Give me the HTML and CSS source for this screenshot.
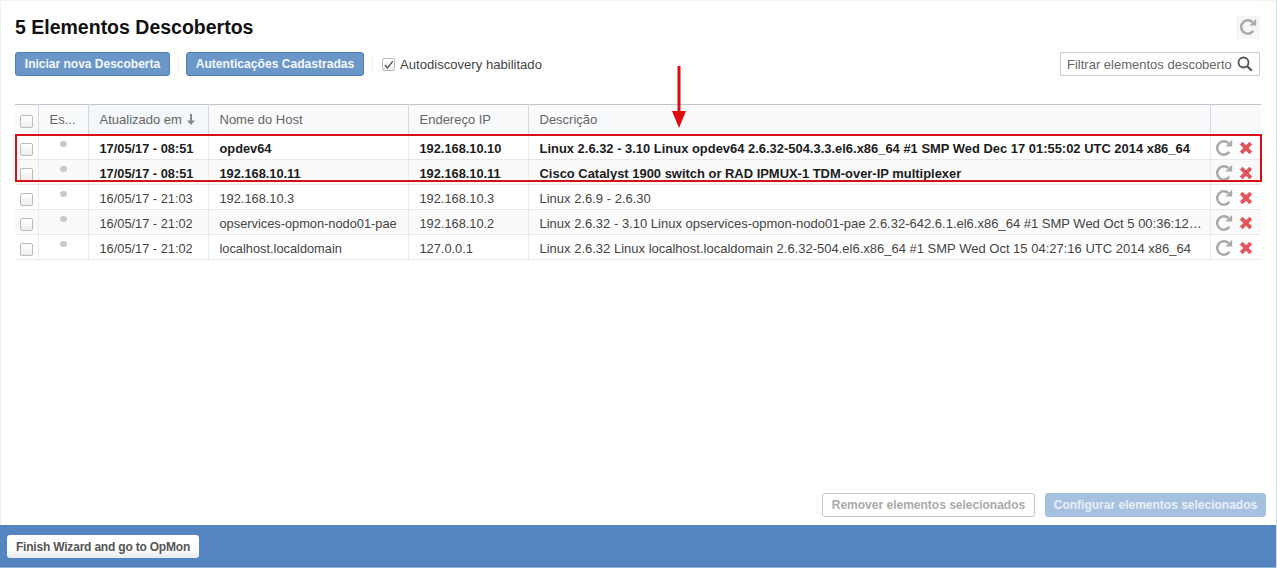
FILE: index.html
```html
<!DOCTYPE html>
<html lang="pt">
<head>
<meta charset="utf-8">
<title>Elementos Descobertos</title>
<link rel="stylesheet" href="styles.css">
</head>
<body>
<svg class="defs" width="0" height="0" aria-hidden="true">
  <symbol id="redo" viewBox="0 0 18 18">
    <path d="M14.4 12.8A6.7 6.700 0 1 1 13.600 4.200" fill="none" stroke="currentColor" stroke-width="2.500"/>
    <path d="M10.400 7.600h6.800V.8z" fill="currentColor"/>
  </symbol>
  <symbol id="del" viewBox="0 0 14 14">
    <path d="M2.200 2.200l9.600 9.600M11.800 2.200l-9.600 9.600" fill="none" stroke="currentColor" stroke-width="3.800"/>
  </symbol>
</svg>
<div class="page">
  <main class="main">
    <header class="title-row">
      <h1 class="title">5 Elementos Descobertos</h1>
      <button class="refresh" type="button" aria-label="Atualizar"><svg class="refresh-icon"><use href="#redo"/></svg></button>
    </header>
    <div class="toolbar">
      <button class="btn btn-primary" type="button">Iniciar nova Descoberta</button>
      <span class="divider"></span>
      <button class="btn btn-primary" type="button">Autenticações Cadastradas</button>
      <span class="divider"></span>
      <label class="auto">
        <span class="check check-on"><svg viewBox="0 0 14 14" class="tick"><path d="M2.500 7l3.200 3.600L12.500 2" fill="none" stroke="#555" stroke-width="1.800"/></svg></span>
        Autodiscovery habilitado
      </label>
      <div class="search">
        <span class="search-text">Filtrar elementos descoberto</span>
        <svg class="search-icon" viewBox="0 0 16 16"><circle cx="6.500" cy="6.500" r="5" fill="none" stroke="#555" stroke-width="1.800"/><path d="M10.200 10.200l4.600 4.600" stroke="#555" stroke-width="2.200"/></svg>
      </div>
    </div>
    <div class="table-wrap">
      <table class="grid">
        <colgroup>
          <col class="c-check"><col class="c-status"><col class="c-date"><col class="c-host"><col class="c-ip"><col class="c-desc"><col class="c-act">
        </colgroup>
        <thead>
          <tr>
            <th class="center"><span class="check"></span></th>
            <th>Es...</th>
            <th class="sorted">Atualizado em <svg class="sort" viewBox="0 0 10 12"><path d="M5 0v9" stroke="#888" stroke-width="2"/><path d="M1 6.500L5 11l4-4.500z" fill="#888"/></svg></th>
            <th>Nome do Host</th>
            <th>Endereço IP</th>
            <th>Descrição</th>
            <th></th>
          </tr>
        </thead>
        <tbody>
          <tr class="bold">
            <td class="center"><span class="check"></span></td><td class="status"><span class="dot"></span></td>
            <td>17/05/17 - 08:51</td><td>opdev64</td><td>192.168.10.10</td>
            <td class="desc">Linux 2.6.32 - 3.10 Linux opdev64 2.6.32-504.3.3.el6.x86_64 #1 SMP Wed Dec 17 01:55:02 UTC 2014 x86_64</td>
            <td class="actions"><svg class="i-redo"><use href="#redo"/></svg><svg class="i-del"><use href="#del"/></svg></td>
          </tr>
          <tr class="bold alt">
            <td class="center"><span class="check"></span></td><td class="status"><span class="dot"></span></td>
            <td>17/05/17 - 08:51</td><td>192.168.10.11</td><td>192.168.10.11</td>
            <td class="desc">Cisco Catalyst 1900 switch or RAD IPMUX-1 TDM-over-IP multiplexer</td>
            <td class="actions"><svg class="i-redo"><use href="#redo"/></svg><svg class="i-del"><use href="#del"/></svg></td>
          </tr>
          <tr>
            <td class="center"><span class="check"></span></td><td class="status"><span class="dot"></span></td>
            <td>16/05/17 - 21:03</td><td>192.168.10.3</td><td>192.168.10.3</td>
            <td class="desc">Linux 2.6.9 - 2.6.30</td>
            <td class="actions"><svg class="i-redo"><use href="#redo"/></svg><svg class="i-del"><use href="#del"/></svg></td>
          </tr>
          <tr class="alt">
            <td class="center"><span class="check"></span></td><td class="status"><span class="dot"></span></td>
            <td>16/05/17 - 21:02</td><td>opservices-opmon-nodo01-pae</td><td>192.168.10.2</td>
            <td class="desc">Linux 2.6.32 - 3.10 Linux opservices-opmon-nodo01-pae 2.6.32-642.6.1.el6.x86_64 #1 SMP Wed Oct 5 00:36:12…</td>
            <td class="actions"><svg class="i-redo"><use href="#redo"/></svg><svg class="i-del"><use href="#del"/></svg></td>
          </tr>
          <tr>
            <td class="center"><span class="check"></span></td><td class="status"><span class="dot"></span></td>
            <td>16/05/17 - 21:02</td><td>localhost.localdomain</td><td>127.0.0.1</td>
            <td class="desc">Linux 2.6.32 Linux localhost.localdomain 2.6.32-504.el6.x86_64 #1 SMP Wed Oct 15 04:27:16 UTC 2014 x86_64</td>
            <td class="actions"><svg class="i-redo"><use href="#redo"/></svg><svg class="i-del"><use href="#del"/></svg></td>
          </tr>
        </tbody>
      </table>
      <div class="highlight"></div>
      <svg class="arrow" viewBox="0 0 16 64"><path d="M8 0v48" stroke="#e00a12" stroke-width="3"/><path d="M1 45h14l-7 17z" fill="#e00a12"/></svg>
    </div>
    <div class="actions-bar">
      <button class="btn btn-outline" type="button">Remover elementos selecionados</button>
      <button class="btn btn-disabled" type="button">Configurar elementos selecionados</button>
    </div>
  </main>
  <footer class="footer">
    <button class="btn btn-finish" type="button">Finish Wizard and go to OpMon</button>
  </footer>
</div>
</body>
</html>
```
FILE: styles.css
```css
* { box-sizing: border-box; }
html, body { margin: 0; height: 100%; background: #fff; overflow: hidden; }
body { font-family: "Liberation Sans", Arial, sans-serif; font-size: 13px; color: #555; }
.defs { position: absolute; }
.page { height: 568px; display: flex; flex-direction: column; border-right: 1px solid #cfe0e2; }
.main { flex: 1; display: flex; flex-direction: column; padding: 14px 16px 8px 14px; border-left: 1px solid #eef2f2; border-top: 1px solid #f1f4f4; min-height: 0; }
.title-row { display: flex; justify-content: space-between; align-items: center; height: 24px; }
.title { margin: 0; font-size: 19.500px; font-weight: bold; color: #111; line-height: 24px; }
.refresh { width: 24px; height: 23px; padding: 0; border: 0; background: #f5f6f6; display: flex; align-items: center; justify-content: center; }
.refresh-icon { width: 18px; height: 18px; color: #a9abad; }
.toolbar { display: flex; align-items: center; height: 24px; margin-top: 13px; }
.btn { font-family: inherit; font-size: 12px; font-weight: bold; height: 24px; padding: 0 8px; border-radius: 3px; white-space: nowrap; }
.btn-primary { background: #6a97c8; border: 1px solid #4f7fb3; color: #f4f7fb; width: 155px; padding: 0; }
.btn-primary + .divider + .btn-primary { width: 178px; font-size: 12.100px; }
.divider { width: 1px; height: 20px; background: #f0f1f2; margin: 0 7.500px; }
.auto { display: flex; align-items: center; gap: 5px; font-size: 13.100px; color: #444; padding-top: 1px; margin-left: 2px; }
.check { display: inline-block; width: 13px; height: 13px; border: 1px solid #bbb; border-radius: 2px; background: linear-gradient(#fff, #eee); vertical-align: middle; position: relative; }
.check-on { display: flex; align-items: center; justify-content: center; }
.tick { width: 12px; height: 12px; }
.search { margin-left: auto; width: 200px; height: 24px; border: 1px solid #ccc; display: flex; align-items: center; padding: 0 6px; gap: 5px; font-size: 13px; color: #666; }
.search-text { flex: 1; overflow: hidden; white-space: nowrap; }
.search-icon { width: 16px; height: 16px; flex: none; }
.table-wrap { position: relative; margin-top: 28px; flex: none; }
.grid { width: 1246px; border-collapse: collapse; table-layout: fixed; border-top: 1px solid #c4c6c8; }
.c-check { width: 23px; } .c-status { width: 50px; } .c-date { width: 120px; } .c-host { width: 200px; } .c-ip { width: 120px; } .c-desc { width: 682px; } .c-act { width: 51px; }
th { height: 30px; padding: 0 10px 0 11px; text-align: left; font-weight: normal; font-size: 13px; color: #666; background: #f9fafc; border-left: 1px solid #d5d7da; border-bottom: 1px solid #dfe1e3; white-space: nowrap; overflow: hidden; }
th.sorted { background: #f3f6fa; }
th:first-child, td:first-child { border-left: 0; padding: 2px 0 0; }
td { height: 25px; padding: 2px 10px 0 11px; border-left: 1px solid #e9eaeb; border-bottom: 1px solid #e7e8e9; font-size: 12.800px; color: #444; white-space: nowrap; overflow: hidden; }
td.desc { font-size: 13px; }
.bold td.desc { font-size: 12.950px; }
.center { text-align: center; }
.alt td { background: #fafafa; }
.bold td { font-weight: bold; color: #1c1c1c; }
td.status { vertical-align: top; text-align: center; padding: 6px 0 0; line-height: 0; }
.dot { display: inline-block; width: 7px; height: 6px; border-radius: 50%; background: #c9c9c9; }
.sort { width: 10px; height: 12px; vertical-align: -2px; }
td.actions { padding: 2px 0 0 4px; }
.actions svg { vertical-align: middle; }
.i-redo { width: 18px; height: 18px; color: #a8aaab; }
.i-del { width: 14px; height: 14px; color: #e2555b; margin-left: 6px; }
.highlight { position: absolute; left: 0; top: 30px; width: 1247px; height: 48px; border: 2px solid #d90f16; pointer-events: none; }
.arrow { position: absolute; left: 656px; top: -38px; width: 16px; height: 64px; }
.actions-bar { margin-top: auto; display: flex; justify-content: flex-end; gap: 10px; margin-right: -6px; }
.btn-outline { width: 213px; padding: 0; background: #fff; border: 1px solid #c5c7c9; color: #aaa; }
.btn-disabled { width: 221px; padding: 0; background: #a6c1e0; border: 1px solid #a6c1e0; color: #e8eef6; }
.footer { height: 43px; flex: none; background: #5585c0; padding: 10px 0 0 7px; border-bottom: 1px solid #8fb3d9; }
.btn-finish { width: 192px; height: 23px; padding: 0; background: linear-gradient(#fff 55%, #e8ecef); border: 0; color: #555; font-size: 12px; letter-spacing: -0.200px; }
```
